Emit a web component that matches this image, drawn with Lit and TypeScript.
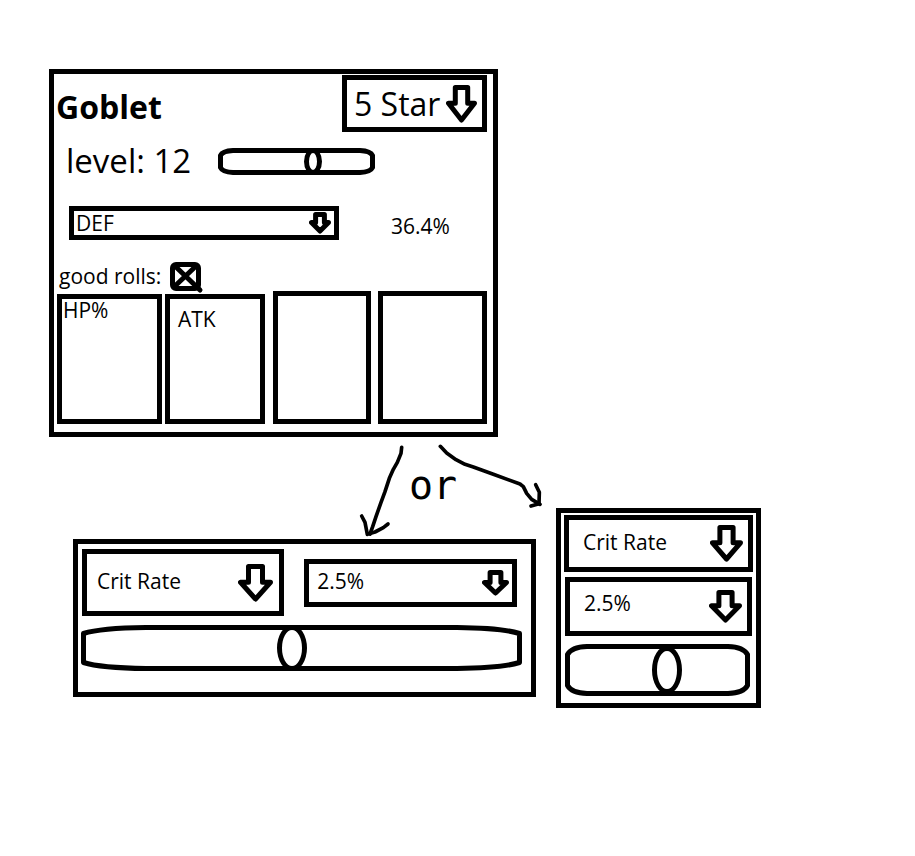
import { LitElement, html, svg, css } from "lit";
import { customElement, property, state } from "lit/decorators.js";

/** Outlined down arrow, drawn to fill a w by h box. */
const downArrow = (w: number, h: number) => {
  const c = w / 2;
  const half = w * 0.2;
  const y = h * 0.48;
  return html`<svg class="arrow" width=${w} height=${h} viewBox="0 0 ${w} ${h}" aria-hidden="true">
    ${svg`<path d="M${c - half} 2.5H${c + half}V${y}H${w - 2.5}L${c} ${h - 3}L2.5 ${y}H${c - half}Z" />`}
  </svg>`;
};

@customElement("sketch-select")
export class SketchSelect extends LitElement {
  @property() label = "";
  @property() value = "";
  @property({ type: Array }) options: string[] = [];
  @property({ type: Number }) arrowWidth = 34;
  @property({ type: Number }) arrowHeight = 38;

  static styles = css`
    :host {
      display: grid;
      box-sizing: border-box;
      border: 5px solid #000;
      background: #fff;
    }
    .field {
      grid-area: 1 / 1;
      appearance: none;
      width: 100%;
      min-width: 0;
      margin: 0;
      border: 0;
      border-radius: 0;
      padding: var(--field-padding, 0);
      background: transparent;
      color: #000;
      font: inherit;
    }
    .arrow {
      grid-area: 1 / 1;
      align-self: center;
      justify-self: end;
      margin-right: var(--arrow-gap, 5px);
      pointer-events: none;
      fill: none;
      stroke: #000;
      stroke-width: 5;
      stroke-linejoin: round;
    }
  `;

  render() {
    return html`
      <select class="field" aria-label=${this.label}>
        ${this.options.map((o) => html`<option ?selected=${o === this.value}>${o}</option>`)}
      </select>
      ${downArrow(this.arrowWidth, this.arrowHeight)}
    `;
  }
}

@customElement("sketch-slider")
export class SketchSlider extends LitElement {
  @property() label = "";
  @property({ type: Number }) value = 50;
  @property({ type: Number }) max = 100;
  /** Proportions of the frame and of its tapered ends. */
  @property({ type: Number }) frameWidth = 160;
  @property({ type: Number }) frameHeight = 27;
  @property({ type: Number }) taper = 15;
  @property({ type: Number }) drop = 5;

  static styles = css`
    :host {
      display: grid;
      height: var(--slider-height, 27px);
    }
    .frame {
      grid-area: 1 / 1;
      width: 100%;
      height: 100%;
      fill: none;
      stroke: #000;
      stroke-width: 5;
      stroke-linejoin: round;
    }
    .range {
      grid-area: 1 / 1;
      appearance: none;
      width: 100%;
      height: 100%;
      min-width: 0;
      margin: 0;
      background: transparent;
    }
    .range::-webkit-slider-thumb {
      appearance: none;
      box-sizing: border-box;
      width: var(--thumb-width, 18px);
      height: var(--thumb-height, 27px);
      border: 5px solid #000;
      border-radius: 50%;
      background: #fff;
    }
  `;

  render() {
    const { frameWidth: w, frameHeight: h, taper: t, drop: d } = this;
    const bend = t * 0.3;
    const path =
      `M${t} 2.5H${w - t}Q${w - bend} 3 ${w - 2.5} ${2.5 + d}V${h - 2.5 - d}` +
      `Q${w - bend} ${h - 3} ${w - t} ${h - 2.5}H${t}Q${bend} ${h - 3} 2.5 ${h - 2.5 - d}V${2.5 + d}Q${bend} 3 ${t} 2.5Z`;
    return html`
      <svg class="frame" viewBox="0 0 ${w} ${h}" preserveAspectRatio="none" aria-hidden="true">
        ${svg`<path vector-effect="non-scaling-stroke" d=${path} />`}
      </svg>
      <input class="range" type="range" min="0" max=${this.max} step="any"
        .value=${String(this.value)} aria-label=${this.label} />
    `;
  }
}

@customElement("app-root")
export class AppRoot extends LitElement {
  @state() private goodRolls = true;

  static styles = css`
    :host {
      display: block;
      box-sizing: border-box;
      min-height: 100vh;
      padding: 69px 49px;
      background: #fff;
      color: #000;
      font: 21px/20px "Open Sans", "Noto Sans", sans-serif;
    }
    .card {
      box-sizing: border-box;
      border: 5px solid #000;
    }

    .artifact {
      max-width: 449px;
      padding: 1px 6px 8px 2px;
    }
    .header {
      display: flex;
      justify-content: space-between;
      align-items: center;
    }
    .title {
      margin: 0;
      padding-top: 6px;
      font-size: 32px;
      line-height: 44px;
    }
    .stars {
      width: 145px;
      height: 57px;
      font-size: 32px;
      line-height: 44px;
      --field-padding: 0 0 0 7px;
    }
    .level {
      display: grid;
      grid-template-columns: 152px 157px;
      align-items: center;
      margin: 7px 0 0 10px;
      font-size: 33px;
      line-height: 44px;
    }
    .main-stat {
      display: flex;
      align-items: center;
      gap: 52px;
      margin: 23px 0 0 13px;
    }
    .stat {
      flex: 0 1 270px;
      height: 34px;
      --field-padding: 0 0 0 2px;
      --arrow-gap: 3px;
    }
    .amount {
      padding-top: 6px;
    }
    .rolls {
      display: flex;
      align-items: center;
      gap: 9px;
      width: max-content;
      margin: 22px 0 0 3px;
      height: 29px;
    }
    .rolls-text {
      padding-bottom: 1px;
    }
    .tick {
      position: relative;
      display: grid;
      width: 31px;
      height: 29px;
    }
    .tick-input {
      appearance: none;
      box-sizing: border-box;
      width: 31px;
      height: 29px;
      margin: 0;
      border: 5px solid #000;
      border-radius: 6px;
    }
    .cross {
      position: absolute;
      inset: 0;
      overflow: visible;
      pointer-events: none;
      fill: none;
      stroke: #000;
      stroke-width: 5;
      stroke-linecap: round;
    }
    .substats {
      display: grid;
      grid-template-columns: 105fr 3fr 100fr 8fr 98fr 7fr 109fr;
      margin-left: 1px;
    }
    .slot {
      box-sizing: border-box;
      height: 133px;
      border: 5px solid #000;
    }
    .slot:nth-child(1) {
      grid-column: 1;
      padding: 1px;
    }
    .slot:nth-child(2) {
      grid-column: 3;
      padding: 10px 8px;
    }
    .slot:nth-child(3) {
      grid-column: 5;
    }
    .slot:nth-child(4) {
      grid-column: 7;
    }
    .slot.filled {
      height: 130px;
      margin-top: 3px;
    }

    .fork {
      position: relative;
      height: 71px;
    }
    .strokes {
      position: absolute;
      left: 291px;
      top: -2px;
      fill: none;
      stroke: #000;
      stroke-width: 11;
      stroke-linecap: round;
      stroke-linejoin: round;
    }
    .or {
      margin: 0;
      padding: 28px 0 0 360px;
      font: 40px/40px "DejaVu Sans Mono", monospace;
    }

    .variants {
      display: grid;
      grid-template-columns: 463fr 205fr;
      column-gap: 20px;
      align-items: start;
      max-width: 688px;
      margin-left: 24px;
    }
    .wide {
      margin-top: 31px;
      padding: 5px 9px 21px 3px;
    }
    .pair {
      display: flex;
      align-items: center;
      gap: 20px;
      margin: 0 5px 9px 1px;
    }
    .pair .substat {
      flex: 202 1 0;
      height: 67px;
      --field-padding: 0 0 3px 10px;
      --arrow-gap: 6px;
    }
    .pair .roll {
      flex: 213 1 0;
      height: 48px;
      --field-padding: 0 0 3px 8px;
      --arrow-gap: 3px;
    }
    .wide-slider {
      --slider-height: 46px;
      --thumb-width: 30px;
      --thumb-height: 46px;
    }
    .narrow {
      padding: 2px 3px 7px;
    }
    .narrow .substat {
      height: 57px;
      --field-padding: 0 0 3px 14px;
    }
    .narrow .roll {
      height: 59px;
      margin: 5px 1px 8px;
      --field-padding: 0 0 7px 14px;
    }
    .narrow-slider {
      margin: 0 3px 0 1px;
      --slider-height: 52px;
      --thumb-width: 30px;
      --thumb-height: 48px;
    }
  `;

  private toggleRolls(e: Event) {
    this.goodRolls = (e.target as HTMLInputElement).checked;
  }

  render() {
    const stats = ["DEF", "ATK", "HP%", "Crit Rate"];
    return html`
      <section class="card artifact">
        <header class="header">
          <h1 class="title">Goblet</h1>
          <sketch-select class="stars" label="Rarity" value="5 Star" .options=${["5 Star", "4 Star"]}
            .arrowWidth=${31} .arrowHeight=${38}></sketch-select>
        </header>
        <div class="level">
          <span>level: 12</span>
          <sketch-slider label="Level" .value=${12.4} .max=${20} .frameWidth=${157}></sketch-slider>
        </div>
        <div class="main-stat">
          <sketch-select class="stat" label="Main stat" value="DEF" .options=${stats}
            .arrowWidth=${22} .arrowHeight=${22}></sketch-select>
          <span class="amount">36.4%</span>
        </div>
        <label class="rolls">
          <span class="rolls-text">good rolls:</span>
          <span class="tick">
            <input class="tick-input" type="checkbox" .checked=${this.goodRolls} @change=${this.toggleRolls} />
            ${this.goodRolls
              ? html`<svg class="cross" width="31" height="29" viewBox="0 0 31 29" aria-hidden="true">
                  <path d="M6 5L30 28M25 5L5 24" />
                </svg>`
              : null}
          </span>
        </label>
        <div class="substats">
          ${["HP%", "ATK", "", ""].map((s) => html`<div class="slot ${s ? "filled" : ""}">${s}</div>`)}
        </div>
      </section>

      <div class="fork">
        <svg class="strokes" width="220" height="110" viewBox="0 0 660 330" aria-hidden="true">
          <path d="M185 37L183 55L172 82L160 103L148 130L135 170L122 205L108 245L98 275L90 297" />
          <path d="M65 243L75 262L82 298L105 291L130 278L144 267" />
          <path d="M301 34L320 54L348 74L375 88L400 96L460 118L540 147L550 155L560 175L575 193L600 208" />
          <path d="M587 149L598 172L597 206L573 213" />
        </svg>
        <p class="or">or</p>
      </div>

      <div class="variants">
        <section class="card wide">
          <div class="pair">
            <sketch-select class="substat" label="Substat" value="Crit Rate" .options=${stats}
              .arrowWidth=${35} .arrowHeight=${38}></sketch-select>
            <sketch-select class="roll" label="Roll" value="2.5%" .options=${["2.5%"]}
              .arrowWidth=${27} .arrowHeight=${26}></sketch-select>
          </div>
          <sketch-slider class="wide-slider" label="Roll value" .value=${47.8}
            .frameWidth=${441} .frameHeight=${46} .taper=${65} .drop=${6}></sketch-slider>
        </section>
        <section class="card narrow">
          <sketch-select class="substat" label="Substat" value="Crit Rate" .options=${stats}
            .arrowWidth=${33} .arrowHeight=${37}></sketch-select>
          <sketch-select class="roll" label="Roll" value="2.5%" .options=${["2.5%"]}
            .arrowWidth=${33} .arrowHeight=${33}></sketch-select>
          <sketch-slider class="narrow-slider" label="Roll value" .value=${56}
            .frameWidth=${185} .frameHeight=${52} .taper=${22} .drop=${8}></sketch-slider>
        </section>
      </div>
    `;
  }
}
